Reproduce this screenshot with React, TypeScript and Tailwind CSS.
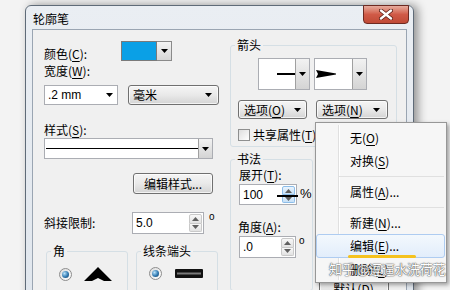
import React from "react";

const Down = ({ c = "#000" }: { c?: string }) => (
  <svg width="7" height="4" viewBox="0 0 7 4">
    <path d="M0 0H7L3.5 4Z" fill={c} />
  </svg>
);
const Up = ({ c = "#000" }: { c?: string }) => (
  <svg width="7" height="4" viewBox="0 0 7 4">
    <path d="M0 4H7L3.5 0Z" fill={c} />
  </svg>
);

const U = ({ children }: { children: React.ReactNode }) => (
  <span className="underline decoration-1 underline-offset-2">{children}</span>
);

function Spinner({ value, className, hover }: { value: string; className: string; hover?: boolean }) {
  const btn = hover
    ? "border-[#8cbde9] bg-linear-to-b from-[#eaf4fd] to-[#c6e0f7]"
    : "border-[#c9c9c9] bg-linear-to-b from-[#f8f8f8] to-[#e2e2e2]";
  return (
    <div className={`relative flex border border-[#abadb3] bg-white ${className}`}>
      <div className="flex flex-1 items-center pl-[3px] font-['Liberation_Sans',sans-serif] text-[12px] leading-[14px]">
        {value}
      </div>
      <div className="my-px mr-px flex w-[13px] flex-col">
        <div className={`flex flex-1 items-center justify-center rounded-t-[2px] border ${btn}`}>
          <Up c="#606060" />
        </div>
        <div className={`flex flex-1 items-center justify-center rounded-b-[2px] border border-t-0 ${btn}`}>
          <Down c="#606060" />
        </div>
      </div>
      {hover && <div className="absolute left-[37px] top-[10px] h-[2px] w-[21px] bg-black" />}
    </div>
  );
}

const Radio = () => (
  <span className="flex h-[13px] w-[13px] items-center justify-center rounded-full border border-[#8d8d8d] bg-linear-to-br from-[#dcdcdc] to-white">
    <span className="h-[7px] w-[7px] rounded-full bg-[radial-gradient(circle_at_35%_35%,#b9e3fb,#2f78b0_55%,#173d5e)]" />
  </span>
);

const btnCls =
  "rounded-[3px] border border-[#707070] bg-linear-to-b from-[#f5f5f5] via-[#e9e9e9] to-[#d4d4d4] shadow-[inset_0_0_0_1px_rgba(255,255,255,0.7)]";

export default function App() {
  return (
    <div className="relative h-[290px] w-[450px] overflow-hidden bg-[#f3f3f3] font-['Noto_Sans_CJK_SC','Noto_Sans',sans-serif] text-[12px] leading-[16px] text-black">
      {/* window */}
      <div className="ml-[25px] mt-[5px] flex h-[300px] w-[389px] flex-col rounded-t-[6px] border border-[#5f6b78] bg-linear-to-b from-[#eaeef3] to-[#e0e6ed] shadow-[4px_0_10px_rgba(0,0,0,0.4)]">
        {/* title bar */}
        <div className="flex h-[26px] items-start justify-between">
          <span className="ml-[7px] mt-[5px] text-[12px] leading-[16px]">轮廓笔</span>
          <div className="-mt-px mr-[4px] flex h-[19px] w-[46px] items-center justify-center rounded-b-[4px] border border-[#6d2a22] bg-linear-to-b from-[#e6ab9d] via-[#d05a47] to-[#c04a36]">
            <svg width="14" height="11" viewBox="0 0 14 11">
              <path d="M2 1.5L12 9.5M12 1.5L2 9.5" stroke="#5a1d15" strokeWidth="4" strokeLinecap="round" />
              <path d="M2 1.5L12 9.5M12 1.5L2 9.5" stroke="#fff" strokeWidth="2.4" strokeLinecap="round" />
            </svg>
          </div>
        </div>

        {/* client area */}
        <div className="mx-[6px] flex flex-1 border border-[#9aa5b2] bg-[#f0f0f0]">
          {/* left column */}
          <div className="ml-[11px] mt-[11px] flex w-[175px] flex-col">
            <div className="flex h-[20px] items-center">
              <span className="mt-[5px] w-[77px]">
                颜色(<U>C</U>):
              </span>
              <div className="h-[20px] w-[36px] border border-[#7a7a7a] bg-[#0aa0e6]" />
              <div className="flex h-[20px] w-[15px] items-center justify-center border border-l-0 border-[#8a8a8a] bg-linear-to-b from-[#f4f4f4] to-[#d6d6d6]">
                <Down />
              </div>
            </div>
            <div className="mt-[2px] h-[16px]">
              宽度(<U>W</U>):
            </div>
            <div className="mt-[6px] flex h-[20px]">
              <div className="flex w-[74px] items-center justify-between border border-[#abadb3] bg-white pl-[3px] pr-[4px]">
                <span className="font-['Liberation_Sans',sans-serif] text-[12px]">.2 mm</span>
                <Down />
              </div>
              <div className={`ml-[10px] flex w-[91px] items-center justify-between pl-[4px] pr-[6px] ${btnCls}`}>
                <span>毫米</span>
                <Down />
              </div>
            </div>
            <div className="mt-[17px] h-[16px]">
              样式(<U>S</U>):
            </div>
            <div className="flex h-[21px] w-[169px] border border-[#abadb3] bg-white">
              <div className="flex flex-1 items-center pl-px">
                <div className="h-px w-full bg-black" />
              </div>
              <div className="flex w-[14px] items-center justify-center border-l border-[#a0a0a0] bg-linear-to-b from-[#f2f2f2] to-[#d4d4d4]">
                <Down />
              </div>
            </div>
            <div className={`ml-[89px] mt-[14px] flex h-[21px] w-[80px] items-center justify-center ${btnCls}`}>
              编辑样式...
            </div>
            <div className="mt-[18px] flex h-[22px] items-center">
              <span className="w-[88px]">斜接限制:</span>
              <Spinner value="5.0" className="h-[22px] w-[72px]" />
              <span className="ml-[5px] self-start font-['Liberation_Sans',sans-serif] text-[10px] leading-[10px]">o</span>
            </div>
            <div className="mt-[9px] flex gap-[8px] pl-[2px]">
              <fieldset className="h-[60px] w-[82px] rounded-[3px] border border-[#d5dfe5]">
                <legend className="ml-[4px] px-[2px] leading-[16px]">角</legend>
                <div className="mt-[8px] flex items-center">
                  <span className="ml-[12px]">
                    <Radio />
                  </span>
                  <svg className="ml-[12px]" width="28" height="14" viewBox="0 0 28 14">
                    <path d="M0 14L14 0L28 14L20 14L14 11L8 14Z" fill="#000" />
                  </svg>
                </div>
              </fieldset>
              <fieldset className="h-[60px] w-[82px] rounded-[3px] border border-[#d5dfe5]">
                <legend className="ml-[4px] px-[2px] leading-[16px]">线条端头</legend>
                <div className="mt-[8px] flex items-center">
                  <span className="ml-[12px]">
                    <Radio />
                  </span>
                  <svg className="ml-[13px]" width="28" height="9" viewBox="0 0 28 9">
                    <rect x="0" y="0" width="28" height="9" rx="1" fill="#111" />
                    <rect x="2" y="3.5" width="24" height="2" fill="#7a7a7a" />
                  </svg>
                </div>
              </fieldset>
            </div>
          </div>

          {/* right column */}
          <div className="ml-[11px] mt-[7px] flex w-[167px] flex-col">
            <fieldset className="rounded-[3px] border border-[#d5dfe5] pb-[3px]">
              <legend className="ml-[4px] px-[2px] leading-[16px]">箭头</legend>
              <div className="ml-[27px] mt-[5px] flex h-[32px] gap-[4px]">
                <div className="flex w-[52px] border border-[#abadb3] bg-white">
                  <div className="flex flex-1 items-center justify-end">
                    <div className="h-[2px] w-[18px] bg-black" />
                  </div>
                  <div className="flex w-[14px] items-center justify-center border-l border-[#a0a0a0] bg-linear-to-b from-[#f2f2f2] to-[#d4d4d4]">
                    <Down />
                  </div>
                </div>
                <div className="flex w-[53px] border border-[#abadb3] bg-white">
                  <div className="flex flex-1 items-center pl-[1px]">
                    <svg width="20" height="8" viewBox="0 0 20 8">
                      <path d="M0 0L20 3.5L20 4.5L0 8L2 4Z" fill="#000" />
                    </svg>
                  </div>
                  <div className="flex w-[14px] items-center justify-center border-l border-[#a0a0a0] bg-linear-to-b from-[#f2f2f2] to-[#d4d4d4]">
                    <Down />
                  </div>
                </div>
              </div>
              <div className="ml-[7px] mt-[10px] flex h-[19px] gap-[9px]">
                <div className={`flex w-[69px] items-center justify-between pl-[5px] pr-[5px] ${btnCls}`}>
                  <span>
                    选项(<U>O</U>)
                  </span>
                  <Down />
                </div>
                <div className={`flex w-[72px] items-center justify-between pl-[5px] pr-[7px] ${btnCls}`}>
                  <span>
                    选项(<U>N</U>)
                  </span>
                  <Down />
                </div>
              </div>
              <div className="ml-[7px] mt-[8px] flex h-[16px] items-center">
                <span className="h-[12px] w-[12px] border border-[#8e8f8f] bg-linear-to-br from-[#dedede] to-white" />
                <span className="ml-[3px] whitespace-nowrap">
                  共享属性(<U>T</U>)
                </span>
              </div>
            </fieldset>

            <div className="mt-[4px] flex">
              <fieldset className="h-[140px] w-[82px] rounded-[3px] border border-[#d5dfe5]">
                <legend className="ml-[4px] px-[2px] leading-[16px]">书法</legend>
                <div className="ml-[8px] h-[16px]">
                  展开(<U>T</U>):
                </div>
                <div className="ml-[8px] mt-px flex items-start">
                  <Spinner value="100" className="h-[21px] w-[58px]" hover />
                  <span className="ml-[3px] mt-[3px] font-['Liberation_Sans',sans-serif] text-[13px] leading-[14px]">%</span>
                </div>
                <div className="ml-[7px] mt-[14px] h-[16px]">
                  角度(<U>A</U>):
                </div>
                <div className="ml-[8px] mt-px flex items-start">
                  <Spinner value=".0" className="h-[22px] w-[57px]" />
                  <span className="ml-[3px] font-['Liberation_Sans',sans-serif] text-[10px] leading-[10px]">o</span>
                </div>
              </fieldset>
              <div className={`ml-[6px] mt-[127px] flex h-[21px] w-[70px] items-center justify-center ${btnCls}`}>
                默认(<U>D</U>)
              </div>
            </div>
          </div>
        </div>
      </div>

      {/* context menu */}
      <div className="absolute left-[315px] top-[122px] flex h-[161px] w-[132px] flex-col border border-[#979797] bg-[#f6f6f6] pt-[3px] shadow-[2px_2px_4px_rgba(0,0,0,0.35)]">
        <div className="absolute bottom-[2px] left-[22px] top-[2px] w-[2px] border-l border-[#e0e0e0] bg-white" />
        <div className="relative flex h-[23px] items-center pl-[34px]">
          无(<U>O</U>)
        </div>
        <div className="relative flex h-[23px] items-center pl-[34px]">
          对换(<U>S</U>)
        </div>
        <div className="relative flex h-[8px] items-center pl-[23px] pr-[2px]">
          <div className="h-px w-full bg-[#e0e0e0]" />
        </div>
        <div className="relative flex h-[23px] items-center pl-[34px]">
          属性(<U>A</U>)...
        </div>
        <div className="relative flex h-[8px] items-center pl-[23px] pr-[2px]">
          <div className="h-px w-full bg-[#e0e0e0]" />
        </div>
        <div className="relative flex h-[23px] items-center pl-[34px]">
          新建(<U>N</U>)...
        </div>
        <div className="relative mr-[1px] flex h-[24px] items-center rounded-[3px] border border-[#aeccf1] bg-linear-to-b from-[#f3f8fd] to-[#e2edfb] pl-[33px]">
          编辑(<U>E</U>)...
          <div className="absolute left-[31px] top-[20px] h-[3px] w-[68px] rounded-full bg-[#f5c21e]" />
        </div>
        <div className="relative flex h-[23px] items-center pl-[34px]">
          删除(<U>L</U>)
        </div>
      </div>

      {/* watermark */}
      <div className="absolute left-[329px] top-[261px] whitespace-nowrap text-[13px] leading-[16px] tracking-[-0.3px] text-white opacity-90 [text-shadow:0_0_1px_#444,0_0_1px_#444,0_0_2px_#777]">
        知乎 @逗逼水洗荷花
      </div>
    </div>
  );
}
